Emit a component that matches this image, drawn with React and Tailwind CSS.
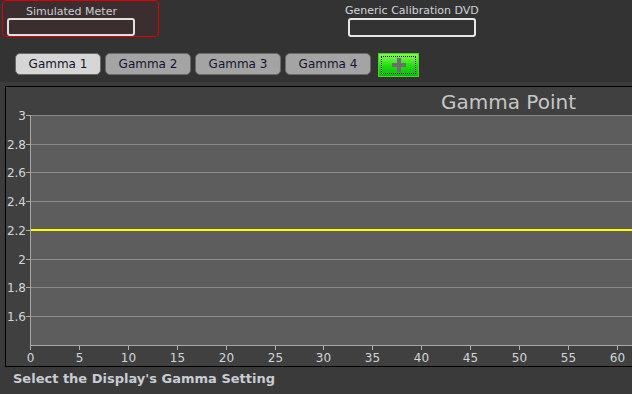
import React from "react";

const font = { fontFamily: '"DejaVu Sans", Verdana, sans-serif' };

function Tab({ label, active }) {
  return (
    <div
      className={`w-[86px] h-[22px] rounded-[5px] border border-[#6a6a6a] flex items-center justify-center text-[12px] text-[#141430] ${
        active ? "bg-[#d6d6d6]" : "bg-[#a4a4a4]"
      }`}
    >
      {label}
    </div>
  );
}

function Chart() {
  const x0 = 24;
  const perUnit = 9.78;
  const yOf = (v) => 230 - (v - 1.4) * 143.75;
  const yTicks = [3, 2.8, 2.6, 2.4, 2.2, 2, 1.8, 1.6];
  const xTicks = [0, 5, 10, 15, 20, 25, 30, 35, 40, 45, 50, 55, 60];
  return (
    <svg width="626" height="250" className="block overflow-visible" style={font}>
      <rect x={x0} y={0} width={626 - x0} height={230} fill="#5d5d5d" />
      {yTicks.map((v) => {
        const y = Math.round(yOf(v)) + 0.5;
        return (
          <g key={v}>
            <line x1={x0} x2={626} y1={y} y2={y} stroke="#8a8a8a" strokeWidth="1" />
            <line x1={x0 - 4} x2={x0} y1={y} y2={y} stroke="#b0b0b0" strokeWidth="1" />
            <text x={x0 - 4} y={y + 4.5} textAnchor="end" fontSize="12" fill="#d2d6dc">
              {v}
            </text>
          </g>
        );
      })}
      <line x1={x0 + 0.5} x2={x0 + 0.5} y1={0} y2={230} stroke="#a8a8a8" strokeWidth="1" />
      <line x1={x0} x2={626} y1={230.5} y2={230.5} stroke="#a8a8a8" strokeWidth="1" />
      <rect x={x0 + 1} y={114} width={626} height={2} fill="#ffff00" />
      {xTicks.map((v) => {
        const x = Math.round(x0 + v * perUnit) + 0.5;
        return (
          <g key={v}>
            <line x1={x} x2={x} y1={230} y2={235} stroke="#b0b0b0" strokeWidth="1" />
            <text x={x} y={247} textAnchor="middle" fontSize="12" fill="#d2d6dc">
              {v}
            </text>
          </g>
        );
      })}
    </svg>
  );
}

export default function App() {
  return (
    <div className="w-[632px] h-[394px] bg-[#333333] overflow-hidden flex flex-col" style={font}>
      {/* top */}
      <div className="h-[82px] shrink-0 flex flex-col">
        <div className="flex h-[37px]">
          <div className="ml-[2px] w-[157px] h-[37px] border border-[#e00000] rounded-[4px] bg-[#3c2e2e] flex flex-col">
            <div className="pl-[23px] pt-[4px] h-[17px] text-[11px] leading-[13px] text-[#c8ccd4]">
              Simulated Meter
            </div>
            <div className="ml-[4px] w-[128px] h-[18px] border-2 border-[#e0e0e0] rounded-[3px]" />
          </div>
          <div className="ml-[186px] flex flex-col">
            <div className="h-[18px] pt-[4px] text-[11px] leading-[13px] text-[#d0d4dc]">
              Generic Calibration DVD
            </div>
            <div className="ml-[3px] w-[128px] h-[19px] border-2 border-[#e8e8e8] rounded-[3px]" />
          </div>
        </div>
        <div className="mt-[16px] ml-[15px] flex items-start gap-[4px]">
          <Tab label="Gamma 1" active />
          <Tab label="Gamma 2" />
          <Tab label="Gamma 3" />
          <Tab label="Gamma 4" />
          <div className="ml-[3px] w-[41px] h-[24px] border border-[#4cd02a] bg-gradient-to-b from-[#7cff4a] via-[#22e010] to-[#00c000] p-[2px]">
            <div className="w-full h-full border border-dotted border-black flex items-center justify-center">
              <svg width="14" height="14" viewBox="0 0 14 14">
                <rect x="5" y="0" width="4" height="14" fill="#6e6e6e" />
                <rect x="0" y="5" width="14" height="4" fill="#6e6e6e" />
              </svg>
            </div>
          </div>
        </div>
      </div>
      {/* chart panel */}
      <div className="bg-[#3b3b3b] pl-[5px] pt-[4px] shrink-0">
        <div className="h-[281px] border-l border-t border-b border-black bg-[#404040] flex flex-col">
          <div className="h-[28px] pl-[435px] pt-[3px] text-[20px] leading-[24px] text-[#c6c6c6] whitespace-nowrap">
            Gamma Point
          </div>
          <Chart />
        </div>
      </div>
      {/* bottom */}
      <div className="flex-1 bg-[#3a3a3a] pl-[13px] pt-[4px] text-[13px] leading-[16px] font-bold text-[#c8ccd4]">
        Select the Display's Gamma Setting
      </div>
    </div>
  );
}
